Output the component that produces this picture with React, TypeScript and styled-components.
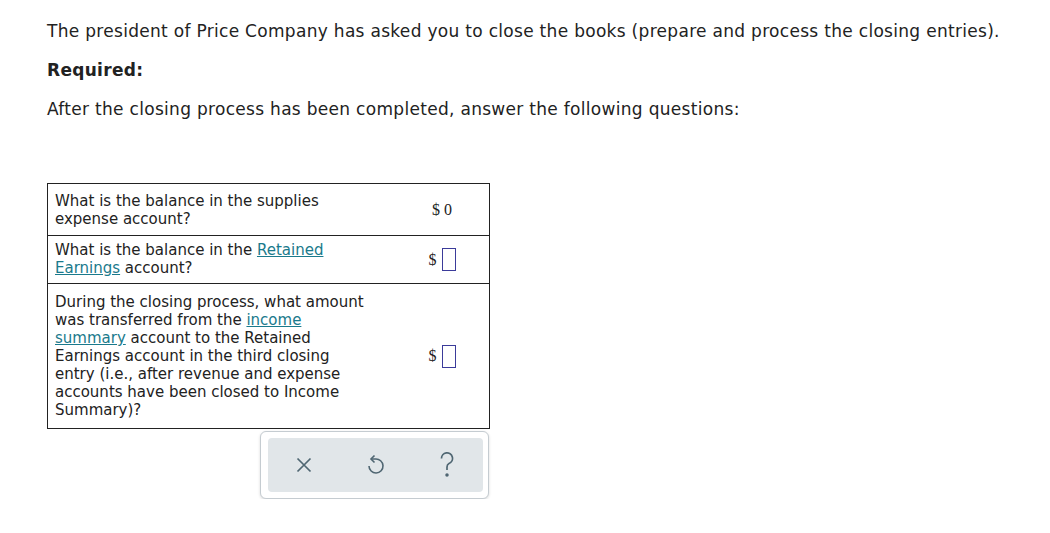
import styled, { createGlobalStyle } from "styled-components";

const Global = createGlobalStyle`
  body {
    margin: 0;
    background: #ffffff;
    font-family: Verdana, "DejaVu Sans", sans-serif;
    color: #222;
  }
`;

const Page = styled.div`
  padding: 21px 0 0 47px;
`;

const Para = styled.p<{ $bold?: boolean }>`
  margin: 0 0 19px 0;
  font-size: 17px;
  line-height: 20px;
  font-weight: ${(p) => (p.$bold ? 700 : 400)};
  letter-spacing: 0.3px;
`;

const Table = styled.table`
  margin-top: 64px;
  width: 443px;
  border-collapse: collapse;
  border: 1px solid #222;
  font-size: 15px;
  line-height: 18px;
`;

const Cell = styled.td<{ $top: number; $bottom: number }>`
  border-top: 1px solid #222;
  padding: ${(p) => `${p.$top}px 4px ${p.$bottom}px 7px`};
  vertical-align: middle;
  width: 314px;
`;

const AmountCell = styled.td`
  border-top: 1px solid #222;
  text-align: center;
  vertical-align: middle;
  font-family: "Liberation Serif", serif;
  font-size: 16px;
  line-height: 18px;
  padding: 0 0 0 22px;
`;

const Link = styled.a`
  color: #1a7a8c;
  text-decoration: underline;
`;

const Dollar = styled.span`
  display: inline-flex;
  align-items: center;
  gap: 5px;
  vertical-align: middle;
`;

const Box = styled.span`
  display: inline-block;
  width: 12px;
  height: 21px;
  border: 1px solid #3b3b9a;
`;

const ToolbarWrap = styled.div`
  margin: 2px 0 0 213px;
  width: 215px;
  padding: 6px 5px 6px 7px;
  border: 1px solid #c5ccd1;
  border-radius: 6px;
  box-shadow: 0 1px 3px rgba(0, 0, 0, 0.15);
  background: #fff;
`;

const Toolbar = styled.div`
  display: flex;
  justify-content: space-around;
  align-items: center;
  height: 54px;
  background: #e1e6e9;
  border-radius: 4px;
  color: #4f6672;
`;

const IconBtn = styled.span`
  display: flex;
  align-items: center;
  justify-content: center;
  width: 30px;
`;

export default function App(): JSX.Element {
  return (
    <Page>
      <Global />
      <Para>
        The president of Price Company has asked you to close the books (prepare and process the closing entries).
      </Para>
      <Para $bold>Required:</Para>
      <Para>After the closing process has been completed, answer the following questions:</Para>
      <Table>
        <tbody>
          <tr>
            <Cell $top={8} $bottom={7}>
              What is the balance in the supplies expense account?
            </Cell>
            <AmountCell>$ 0</AmountCell>
          </tr>
          <tr>
            <Cell $top={5} $bottom={6}>
              What is the balance in the <Link>Retained Earnings</Link> account?
            </Cell>
            <AmountCell>
              <Dollar>
                $ <Box />
              </Dollar>
            </AmountCell>
          </tr>
          <tr>
            <Cell $top={9} $bottom={9}>
              During the closing process, what amount was transferred from the <Link>income summary</Link> account to
              the Retained Earnings account in the third closing entry (i.e., after revenue and expense accounts have
              been closed to Income Summary)?
            </Cell>
            <AmountCell>
              <Dollar>
                $ <Box />
              </Dollar>
            </AmountCell>
          </tr>
        </tbody>
      </Table>
      <ToolbarWrap>
        <Toolbar>
          <IconBtn>
            <svg width="16" height="16" viewBox="0 0 16 16" fill="none" stroke="currentColor" strokeWidth="1.7">
              <path d="M1.5 1.5 L14.5 14.5 M14.5 1.5 L1.5 14.5" />
            </svg>
          </IconBtn>
          <IconBtn>
            <svg width="18" height="23" viewBox="0 0 18 23" fill="none" stroke="currentColor" strokeWidth="1.6">
              <path d="M6 5 H9.5 A7 7 0 1 1 3 12" />
              <path d="M8.5 1.5 L5 5 L8.5 8.5" />
            </svg>
          </IconBtn>
          <IconBtn>
            <svg width="14" height="26" viewBox="0 0 14 26" fill="none" stroke="currentColor" strokeWidth="1.7">
              <path d="M1.5 6.5 A5.5 5.5 0 1 1 9 11.5 Q7 12.5 7 15 V18" />
              <circle cx="7" cy="23" r="0.9" fill="currentColor" />
            </svg>
          </IconBtn>
        </Toolbar>
      </ToolbarWrap>
    </Page>
  );
}
